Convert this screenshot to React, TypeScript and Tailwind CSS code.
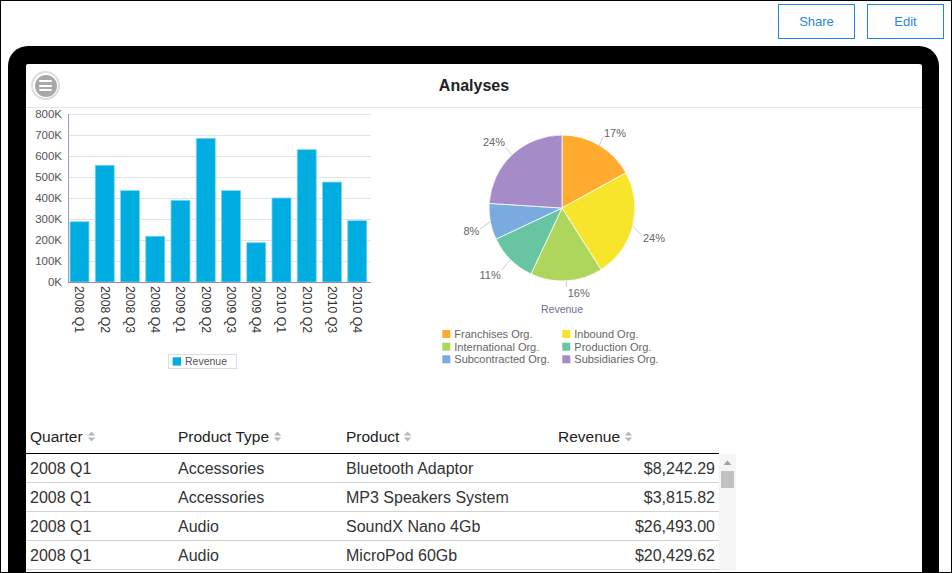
import React from "react";

const bars = [287, 556, 435, 218, 389, 684, 435, 187, 400, 630, 476, 292];
const quarters = [
  "2008 Q1", "2008 Q2", "2008 Q3", "2008 Q4",
  "2009 Q1", "2009 Q2", "2009 Q3", "2009 Q4",
  "2010 Q1", "2010 Q2", "2010 Q3", "2010 Q4",
];

function BarChart() {
  const ticks = [800, 700, 600, 500, 400, 300, 200, 100, 0];
  return (
    <svg width="360" height="270" viewBox="0 0 360 270" style={{ fontFamily: '"Liberation Sans", Arial, sans-serif' }}>
      {ticks.map((t, k) => {
        const y = 6 + 21 * k;
        return (
          <g key={t}>
            {t !== 0 && <line x1="42" x2="345" y1={y + 0.5} y2={y + 0.5} stroke="#dde4ec" strokeWidth="1" />}
            <text x="36" y={y + 4} textAnchor="end" fontSize="11.5" fill="#555">{t}K</text>
          </g>
        );
      })}
      {bars.map((v, i) => {
        const x = 44 + i * 25.25;
        const top = 174 - v * 0.21;
        return (
          <rect key={i} x={x} y={top} width="19" height={174 - top} fill="#00ade0" stroke="#7fd3ef" strokeWidth="0.8" />
        );
      })}
      <line x1="42.5" x2="42.5" y1="6" y2="174" stroke="#9b9bb4" strokeWidth="1" />
      <line x1="42" x2="345" y1="174.5" y2="174.5" stroke="#8f8fac" strokeWidth="1.2" />
      {quarters.map((q, i) => {
        const cx = 44 + i * 25.25 + 9.5;
        return (
          <text key={q} transform={`translate(${cx},178) rotate(90)`} x="0" y="4.2" fontSize="12.3" fill="#333">{q}</text>
        );
      })}
      <rect x="142.5" y="246.5" width="68" height="14" fill="#fff" stroke="#d8dee8" strokeWidth="1" />
      <rect x="146.7" y="249.3" width="8.3" height="8.3" fill="#00ade0" />
      <text x="159" y="257" fontSize="10.5" fill="#555">Revenue</text>
    </svg>
  );
}

const slices = [
  { name: "Franchises Org.", v: 0.17, color: "#ffab30" },
  { name: "Inbound Org.", v: 0.24, color: "#f6e52a" },
  { name: "International Org.", v: 0.16, color: "#afd65c" },
  { name: "Production Org.", v: 0.11, color: "#67c5a2" },
  { name: "Subcontracted Org.", v: 0.08, color: "#79abdf" },
  { name: "Subsidiaries Org.", v: 0.24, color: "#a58bc7" },
];

function PieChart() {
  const cx = 132;
  const cy = 100;
  const r = 73;
  let acc = 0;
  const pt = (f: number) => {
    const a = f * 2 * Math.PI;
    return [cx + r * Math.sin(a), cy - r * Math.cos(a)];
  };
  const paths = slices.map((s) => {
    const [x1, y1] = pt(acc);
    const [x2, y2] = pt(acc + s.v);
    const large = s.v > 0.5 ? 1 : 0;
    acc += s.v;
    return { d: `M${cx},${cy} L${x1},${y1} A${r},${r} 0 ${large} 1 ${x2},${y2} Z`, color: s.color };
  });
  const labels = [
    { t: "17%", x: 174, y: 28.7, a: "start", l: [169.2, 37.2, 173.3, 28.7] },
    { t: "24%", x: 213, y: 133.7, a: "start", l: [202.7, 118.2, 212.5, 128] },
    { t: "16%", x: 137.7, y: 189, a: "start", l: [136.6, 172.9, 136.2, 179] },
    { t: "11%", x: 70.7, y: 171, a: "end", l: [80.4, 151.6, 71.7, 162] },
    { t: "8%", x: 49.3, y: 126.7, a: "end", l: [60.3, 113.7, 50, 121] },
    { t: "24%", x: 75, y: 38.3, a: "end", l: [82, 46.8, 75, 39] },
  ];
  const legendRows = [226, 238.7, 251.3];
  return (
    <svg width="270" height="270" viewBox="0 0 270 270" style={{ fontFamily: '"Liberation Sans", Arial, sans-serif' }}>
      {paths.map((p, i) => (
        <path key={i} d={p.d} fill={p.color} stroke="#fff" strokeWidth="0.8" strokeLinejoin="round" />
      ))}
      {labels.map((lb, i) => (
        <g key={i}>
          <line x1={lb.l[0]} y1={lb.l[1]} x2={lb.l[2]} y2={lb.l[3]} stroke="#c9cdd8" strokeWidth="1" />
          <text x={lb.x} y={lb.y} textAnchor={lb.a as "start" | "end"} fontSize="11" fill="#666">{lb.t}</text>
        </g>
      ))}
      <text x="132" y="205" textAnchor="middle" fontSize="10.5" fill="#6d6d9c">Revenue</text>
      {slices.map((s, i) => {
        const col = i % 2;
        const row = Math.floor(i / 2);
        const sx = col === 0 ? 12.3 : 132.3;
        const y = legendRows[row];
        return (
          <g key={s.name}>
            <rect x={sx} y={y - 4} width="8" height="8" fill={s.color} />
            <text x={sx + 12} y={y + 4} fontSize="11" fill="#666">{s.name}</text>
          </g>
        );
      })}
    </svg>
  );
}

function SortIcon() {
  return (
    <svg width="9" height="11" viewBox="0 0 9 11">
      <path d="M4.5 0.5 L8.3 4.6 H0.7Z" fill="#b8b8b8" />
      <path d="M4.5 10.5 L8.3 6.4 H0.7Z" fill="#b8b8b8" />
    </svg>
  );
}

const rows = [
  ["2008 Q1", "Accessories", "Bluetooth Adaptor", "$8,242.29"],
  ["2008 Q1", "Accessories", "MP3 Speakers System", "$3,815.82"],
  ["2008 Q1", "Audio", "SoundX Nano 4Gb", "$26,493.00"],
  ["2008 Q1", "Audio", "MicroPod 60Gb", "$20,429.62"],
];

export default function App() {
  return (
    <div
      className="w-[952px] h-[573px] border border-black bg-white overflow-hidden"
      style={{ fontFamily: '"Liberation Sans", Arial, sans-serif' }}
    >
      <div className="flex justify-end gap-[12px] pt-[3px] pr-[7px]">
        <button className="w-[77px] h-[35px] border border-[#1f86e8] text-[#2a86e6] text-[13px] bg-white">Share</button>
        <button className="w-[77px] h-[35px] border border-[#1f86e8] text-[#2a86e6] text-[13px] bg-white">Edit</button>
      </div>
      <div className="mt-[7px] ml-[7px] w-[931px] h-[620px] border-black border-l-[18px] border-r-[17px] border-t-[18px] rounded-t-[20px] bg-white">
        <div className="grid grid-cols-[1fr_auto_1fr] items-center h-[44px] border-b border-[#e2e2e2]">
          <div className="pl-[5px] flex items-center">
            <div className="w-[29px] h-[29px] rounded-full border-2 border-[#dcdcdc] flex items-center justify-center">
              <div className="w-[22px] h-[22px] rounded-full bg-[#a8a8a8] flex flex-col items-center justify-center gap-[2.5px]">
                <div className="w-[13px] h-[2px] bg-white rounded-[1px]" />
                <div className="w-[13px] h-[2px] bg-white rounded-[1px]" />
                <div className="w-[13px] h-[2px] bg-white rounded-[1px]" />
              </div>
            </div>
          </div>
          <div className="text-[16px] font-bold text-[#222]">Analyses</div>
          <div />
        </div>
        <div className="flex h-[312px]">
          <BarChart />
          <div className="ml-[44px]">
            <PieChart />
          </div>
        </div>
        <div className="w-[710px]">
          <div className="flex h-[34px] w-[693px] border-b border-black text-[15.5px] text-[#222]">
            <div className="w-[148px] pl-[4px] flex items-center gap-[4px]">Quarter<SortIcon /></div>
            <div className="w-[168px] pl-[4px] flex items-center gap-[4px]">Product Type<SortIcon /></div>
            <div className="w-[212px] pl-[4px] flex items-center gap-[4px]">Product<SortIcon /></div>
            <div className="w-[165px] pl-[4px] flex items-center gap-[4px]">Revenue<SortIcon /></div>
          </div>
          <div className="flex">
            <div className="w-[693px]">
              {rows.map((r, i) => (
                <div key={i} className="flex h-[29px] pt-[1px] border-b border-[#d2d2d2] text-[16px] text-[#333]">
                  <div className="w-[148px] pl-[4px] flex items-center">{r[0]}</div>
                  <div className="w-[168px] pl-[4px] flex items-center">{r[1]}</div>
                  <div className="w-[212px] pl-[4px] flex items-center">{r[2]}</div>
                  <div className="w-[165px] pr-[4px] flex items-center justify-end">{r[3]}</div>
                </div>
              ))}
            </div>
            <div className="w-[17px] bg-[#f5f5f5] flex flex-col items-center pt-[6px]">
              <svg width="9" height="6" viewBox="0 0 9 6">
                <path d="M4.5 0.5 L8.5 5 H0.5Z" fill="#a3a3a3" />
              </svg>
              <div className="mt-[5px] w-[13px] h-[17px] bg-[#c1c1c1]" />
            </div>
          </div>
        </div>
      </div>
    </div>
  );
}
